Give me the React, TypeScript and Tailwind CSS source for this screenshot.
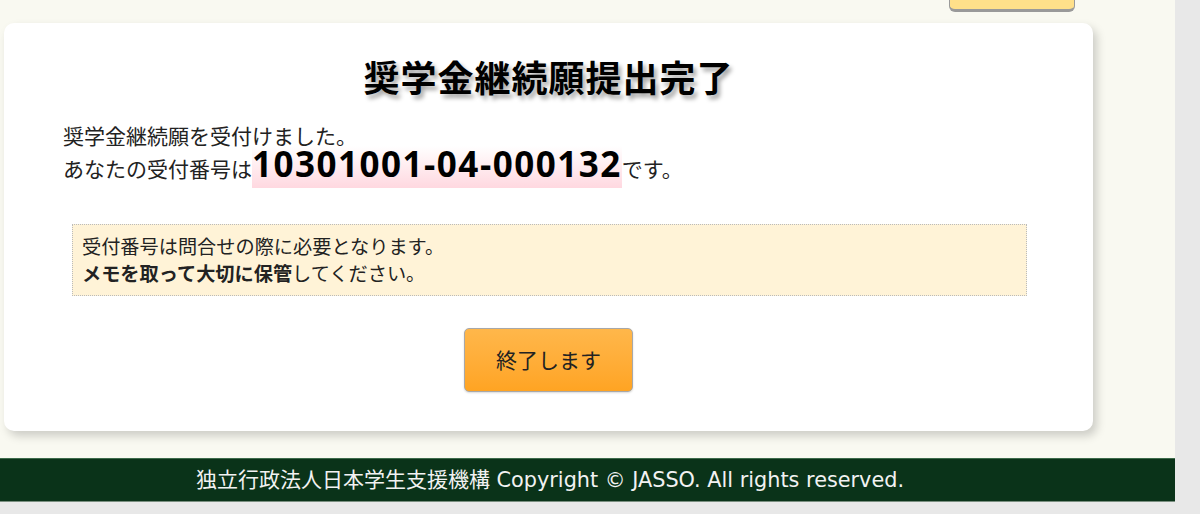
import React from "react";

export default function App() {
  return (
    <div className="w-[1200px] h-[514px] bg-[#e8e8e8] overflow-hidden font-['Noto_Sans_CJK_JP',sans-serif] text-[#222]">
      <div className="w-[1175px] h-[458px] bg-[#f9f9f1] flex flex-col">
        <div className="flex justify-end pr-[100px]">
          <div className="w-[126px] h-[12px] bg-[#ffe08a] border-x border-b-[3px] border-[#9a9a9a] rounded-b-[6px]" />
        </div>
        <div className="mt-[11px] ml-[4px] w-[1089px] h-[408px] rounded-[10px] bg-white shadow-[4px_5px_10px_rgba(0,0,0,0.18)] flex flex-col">
          <h1 className="mt-[28px] text-center text-[36px] leading-[50px] font-bold text-black tracking-[1px] [text-shadow:3px_4px_4px_#a8a8a8]">
            奨学金継続願提出完了
          </h1>
          <div className="mt-[23px] pl-[59px] text-[21px]">
            <div className="leading-[22px]">奨学金継続願を受付けました。</div>
            <div className="flex items-baseline">
              <span>あなたの受付番号は</span>
              <span className="inline-block h-[42px] leading-[36px] font-['Open_Sans',sans-serif] font-bold text-[35px] tracking-[1.5px] text-black bg-gradient-to-b from-white to-[#ffd8e0]">
                10301001-04-000132
              </span>
              <span>です。</span>
            </div>
          </div>
          <div className="mt-[36px] ml-[68px] w-[955px] h-[72px] bg-[#fff3d7] border border-dotted border-[#bbb] pl-[9px] pt-[8px] text-[19.2px] leading-[27px]">
            <div>受付番号は問合せの際に必要となります。</div>
            <div>
              <span className="font-bold">メモを取って大切に保管</span>してください。
            </div>
          </div>
          <div className="mt-[32px] flex justify-center">
            <button className="w-[169px] h-[64px] rounded-[5px] border border-[#a8a8a8] bg-gradient-to-b from-[#ffb74a] to-[#ffa422] text-[21px] text-[#222] shadow-[0_1px_2px_rgba(0,0,0,0.15)]">
              終了します
            </button>
          </div>
        </div>
      </div>
      <div className="w-[1175px] h-[44px] bg-[#0a3319] border-t border-t-[#3d6b4b] border-b border-b-[#7a8f80] flex items-center">
        <div className="w-[1100px] text-center text-[#f2f2f2] whitespace-nowrap">
          <span className="text-[21px] font-['Noto_Sans_CJK_JP',sans-serif]">独立行政法人日本学生支援機構</span>
          <span className="text-[20.8px] font-['DejaVu_Sans',sans-serif]"> Copyright © JASSO. All rights reserved.</span>
        </div>
      </div>
    </div>
  );
}
